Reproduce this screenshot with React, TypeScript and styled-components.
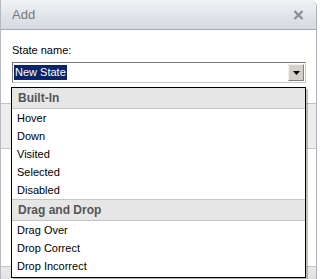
import React from "react";
import styled, { createGlobalStyle } from "styled-components";

const GlobalStyle = createGlobalStyle`
  html, body {
    margin: 0;
    padding: 0;
    background: #ffffff;
  }
  body {
    font-family: "Liberation Sans", Arial, sans-serif;
    font-size: 11px;
  }
`;

const Window = styled.div`
  position: relative;
  width: 317px;
  height: 279px;
  box-sizing: border-box;
  border-left: 1px solid #b4bac2;
  border-right: 1px solid #a8afb8;
  border-top-right-radius: 7px;
  background: #ffffff;
  overflow: hidden;
`;

const TitleBar = styled.div`
  display: flex;
  align-items: center;
  justify-content: space-between;
  height: 30px;
  padding: 0 12px 0 11px;
  box-sizing: border-box;
  background: linear-gradient(#f0f2f5, #dfe3e8 60%, #d6dbe1);
  border-bottom: 1px solid #a4abb4;
`;

const Title = styled.span`
  font-size: 13px;
  color: #787878;
`;

const Body = styled.div`
  display: flex;
  flex-direction: column;
  padding: 13px 10px 0 11px;
`;

const Label = styled.div`
  color: #000000;
  line-height: 14px;
  margin-bottom: 5px;
`;

const Combo = styled.div`
  display: flex;
  height: 21px;
  width: 294px;
  box-sizing: border-box;
  border: 1px solid #7f9db9;
  border-color: #7a7a7a #c8c8c8 #c8c8c8 #7a7a7a;
  background: #ffffff;
  padding: 1px;
`;

const ComboText = styled.div`
  flex: 1;
  display: flex;
  align-items: center;
`;

const Selected = styled.span`
  background: #0a246a;
  color: #ffffff;
  line-height: 15px;
  padding: 0 1px;
`;

const ComboButton = styled.div`
  width: 14px;
  display: flex;
  align-items: center;
  justify-content: center;
  background: #d4d0c8;
  border: 1px solid;
  border-color: #f0f0f0 #808080 #808080 #f0f0f0;
`;

const Backdrop = styled.div`
  display: flex;
  flex-direction: column;
  margin: 20px -10px 0 -12px;
`;

const Band = styled.div`
  height: 44px;
  background: #ececec;
  border-top: 1px solid #c2c2c2;
  border-bottom: 1px solid #c6c6c6;
`;

const Spacer = styled.div`
  height: 117px;
`;

const Footer = styled.div`
  height: 20px;
  background: linear-gradient(#e9e9e9, #dcdcdc);
  border-top: 1px solid #c4c4c4;
`;

const List = styled.div`
  position: absolute;
  top: 87px;
  left: 10px;
  width: 295px;
  height: 191px;
  box-sizing: border-box;
  border: 1px solid #000000;
  background: #ffffff;
  box-shadow: 2px 2px 0 rgba(120, 120, 120, 0.45);
  display: flex;
  flex-direction: column;
`;

const GroupHeader = styled.div<{ $first?: boolean }>`
  height: 20px;
  display: flex;
  align-items: center;
  padding-left: 6px;
  background: #e6e6e6;
  border-top: ${(p) => (p.$first ? "none" : "1px solid #c4c4c4")};
  border-bottom: 1px solid #c4c4c4;
  color: #555555;
  font-weight: bold;
  font-size: 12px;
`;

const Item = styled.div`
  height: 18px;
  display: flex;
  align-items: center;
  padding-left: 5px;
  color: #000000;
`;

const CloseIcon = () => (
  <svg width="11" height="10" viewBox="0 0 11 10">
    <path d="M1.5 1 L9.5 9 M9.5 1 L1.5 9" stroke="#8a9098" strokeWidth="2.4" />
  </svg>
);

const Arrow = () => (
  <svg width="7" height="4" viewBox="0 0 7 4">
    <path d="M0 0 H7 L3.5 4 Z" fill="#000000" />
  </svg>
);

const groups = [
  { name: "Built-In", items: ["Hover", "Down", "Visited", "Selected", "Disabled"] },
  { name: "Drag and Drop", items: ["Drag Over", "Drop Correct", "Drop Incorrect"] },
];

export default function App() {
  return (
    <>
      <GlobalStyle />
      <Window>
        <TitleBar>
          <Title>Add</Title>
          <CloseIcon />
        </TitleBar>
        <Body>
          <Label>State name:</Label>
          <Combo>
            <ComboText>
              <Selected>New State</Selected>
            </ComboText>
            <ComboButton>
              <Arrow />
            </ComboButton>
          </Combo>
          <Backdrop>
            <Band />
            <Spacer />
            <Footer />
          </Backdrop>
        </Body>
        <List>
          {groups.map((g, i) => (
            <React.Fragment key={g.name}>
              <GroupHeader $first={i === 0}>{g.name}</GroupHeader>
              {g.items.map((it) => (
                <Item key={it}>{it}</Item>
              ))}
            </React.Fragment>
          ))}
        </List>
      </Window>
    </>
  );
}
